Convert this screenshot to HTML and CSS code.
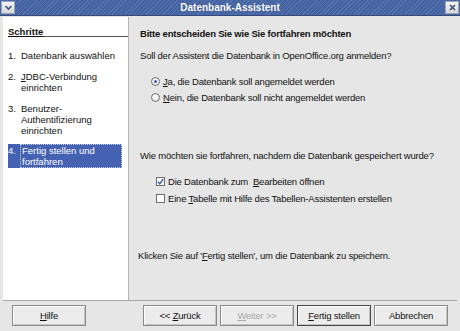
FILE: index.html
```html
<!DOCTYPE html>
<html lang="de">
<head>
  <meta charset="UTF-8" />
  <title>Datenbank-Assistent</title>
  <link rel="stylesheet" href="styles.css">
</head>
<body>

  <div class="window">
    <!-- Title bar -->
    <div class="titlebar">
      <div class="tb-btn">
        <svg width="9" height="9" viewBox="0 0 9 9"><path d="M1.5 3 L4.5 6 L7.5 3" fill="none" stroke="#3a4f80" stroke-width="1.6"/></svg>
      </div>
      <div class="tb-title">Datenbank-Assistent</div>
      <div class="tb-btn">
        <svg width="9" height="9" viewBox="0 0 9 9"><path d="M2 2 L7 7 M7 2 L2 7" fill="none" stroke="#3a4f80" stroke-width="1.6"/></svg>
      </div>
    </div>

    <div class="main">
      <!-- Steps -->
      <div class="steps">
        <div class="steps-head">Schritte</div>
        <div class="step"><span class="num">1.</span><span>Datenbank auswählen</span></div>
        <div class="step"><span class="num">2.</span><span class="mn">JDBC-Verbindung einrichten</span></div>
        <div class="step"><span class="num">3.</span><span>Benutzer-Authentifizierung einrichten</span></div>
        <div class="step active"><span class="num">4.</span><span class="focus">Fertig stellen und fortfahren</span></div>
      </div>

      <!-- Page content -->
      <div class="content">
        <div class="head">Bitte entscheiden Sie wie Sie fortfahren möchten</div>
        <p class="q1">Soll der Assistent die Datenbank in OpenOffice.org anmelden?</p>
        <div class="opts radios">
          <label class="opt"><span class="radio on"></span><span><u>J</u>a, die Datenbank soll angemeldet werden</span></label>
          <label class="opt"><span class="radio"></span><span><u>N</u>ein, die Datenbank soll nicht angemeldet werden</span></label>
        </div>
        <p class="q2">Wie möchten sie fortfahren, nachdem die Datenbank gespeichert wurde?</p>
        <div class="opts checks">
          <label class="opt"><span class="check on">
            <svg width="7" height="7" viewBox="0 0 7 7"><path d="M0.8 3.6 L2.8 5.8 L6.2 1" fill="none" stroke="#3b5aa8" stroke-width="1.4"/></svg>
          </span><span>Die Datenbank zum &nbsp;<u>B</u>earbeiten öffnen</span></label>
          <label class="opt"><span class="check"></span><span>Eine <u>T</u>abelle mit Hilfe des Tabellen-Assistenten erstellen</span></label>
        </div>
        <p class="finish">Klicken Sie auf '<u>F</u>ertig stellen', um die Datenbank zu speichern.</p>
      </div>
    </div>

    <!-- Buttons -->
    <div class="buttons">
      <button class="btn help"><u>H</u>ilfe</button>
      <div class="nav">
        <button class="btn">&lt;&lt; <u>Z</u>urück</button>
        <button class="btn disabled"><u>W</u>eiter &gt;&gt;</button>
        <button class="btn default"><u>F</u>ertig stellen</button>
        <button class="btn">Abbrechen</button>
      </div>
    </div>
  </div>

</body>
</html>
```

FILE: styles.css
```css
* {
  margin: 0; padding: 0;
  box-sizing: border-box;
}

body, html {
  width: 460px;
  height: 331px;
  overflow: hidden;
  font-family: 'Liberation Sans', Arial, sans-serif;
  font-size: 9.5px;
  letter-spacing: -0.2px;
  color: #111;
  background: #e6e6e6;
}

.window {
  height: 331px;
  display: flex;
  flex-direction: column;
}

.titlebar {
  height: 16px;
  display: flex;
  align-items: center;
  padding: 0 1px;
  background: repeating-linear-gradient(135deg, #45649f 0 2px, #5573b3 2px 3px);
  border-bottom: 1px solid #34497e;
}

.tb-btn {
  width: 14px;
  height: 13px;
  background: linear-gradient(#f4f4f4, #d8d8d8);
  border: 1px solid #9aa3b5;
  display: flex;
  align-items: center;
  justify-content: center;
}

.tb-title {
  flex: 1;
  text-align: center;
  color: #fff;
  font-weight: bold;
  font-size: 10px;
  letter-spacing: 0;
  text-shadow: 0 0 1px #2c417a;
}

.main {
  flex: 1;
  display: flex;
  margin: 1px 3px 0 3px;
  border-bottom: 1px solid #a8a8a8;
}

.steps {
  width: 126px;
  background: #fff;
  border-right: 1px solid #b4b4b4;
  padding: 10px 0 0 5px;
  letter-spacing: 0;
}

.steps-head {
  font-weight: bold;
  border-bottom: 1px solid #555;
  margin-bottom: 13px;
  text-decoration: underline;
  line-height: 9px;
}

.step {
  display: flex;
  line-height: 11px;
  margin-bottom: 10px;
  padding-right: 6px;
}

.step .num {
  width: 13px;
  flex: none;
}

/* mnemonic underline on the first letter */
.step .mn::first-letter {
  text-decoration: underline;
}

.step.active {
  background: #4562b2;
  color: #fff;
  padding: 1px 0;
  margin-top: -2px;
  margin-right: 6px;
}

.step .focus {
  border: 1px dotted #c8d0e8;
  padding: 0 3px 0 1px;
  margin: -1px 0 -1px -1px;
}

.content {
  flex: 1;
  padding: 11px 0 0 11px;
}

.head {
  font-weight: bold;
  line-height: 11px;
  margin-bottom: 11px;
}

.content p {
  line-height: 11px;
}

.opts {
  display: flex;
  flex-direction: column;
  gap: 5px;
  margin: 15px 0 0 11px;
}

.opt {
  display: flex;
  align-items: center;
  gap: 3px;
  line-height: 11px;
}

.radio {
  width: 9px;
  height: 9px;
  border-radius: 50%;
  border: 1px solid #6e6e6e;
  background: radial-gradient(circle at 40% 35%, #fff, #e0e0e0);
  position: relative;
}

.radio.on::after {
  content: "";
  position: absolute;
  left: 2px; top: 2px;
  width: 3px; height: 3px;
  border-radius: 50%;
  background: #3b5aa8;
}

.q2 {
  margin-top: 47px;
}

.checks {
  margin: 15px 0 0 16px;
  gap: 6px;
}

.check {
  width: 9px;
  height: 9px;
  border: 1px solid #6e6e6e;
  background: #fff;
  display: flex;
  align-items: center;
  justify-content: center;
}

.finish {
  margin-top: 46px;
  margin-left: -2px;
}

.buttons {
  display: flex;
  align-items: center;
  padding: 4px 12px 5px 12px;
  height: 30px;
}

.btn {
  font-family: inherit;
  font-size: 9.5px;
  letter-spacing: -0.2px;
  color: #111;
  height: 21px;
  width: 74px;
  background: #ececec;
  border: 1px solid #8a8a8a;
  box-shadow: inset 1px 1px 0 #fff, inset -1px -1px 0 #c4c4c4;
}

.btn.disabled {
  color: #a8a8a8;
}

.btn.default {
  border-color: #444;
}

.nav {
  margin-left: auto;
  display: flex;
  gap: 3px;
}
```
